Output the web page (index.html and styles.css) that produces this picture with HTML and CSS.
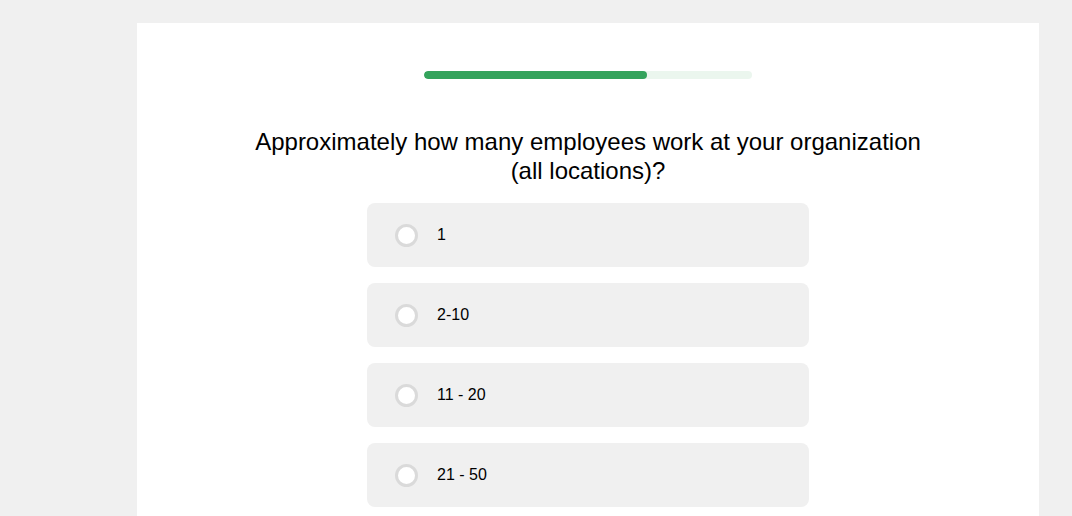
FILE: index.html
```html
<!DOCTYPE html>
<html lang="en">
<head>
  <meta charset="UTF-8">
  <meta name="viewport" content="width=device-width, initial-scale=1.0">
  <title>Survey</title>
  <link rel="stylesheet" href="styles.css">
</head>
<body>

<div class="survey-card">
  <div class="progress">
    <div class="progress-fill"></div>
  </div>

  <h2 class="question">Approximately how many employees work at your organization (all locations)?</h2>

  <div class="options">
    <label class="option">
      <span class="radio"></span>
      <span class="option-text">1</span>
    </label>
    <label class="option">
      <span class="radio"></span>
      <span class="option-text">2-10</span>
    </label>
    <label class="option">
      <span class="radio"></span>
      <span class="option-text">11 - 20</span>
    </label>
    <label class="option">
      <span class="radio"></span>
      <span class="option-text">21 - 50</span>
    </label>
  </div>
</div>

</body>
</html>
```

FILE: styles.css
```css
body {
  margin: 0;
  padding: 23px 0 0 137px;
  background-color: #f0f0f0;
  font-family: "Liberation Sans", Arial, sans-serif;
  color: #111;
}

.survey-card {
  width: 902px;
  min-height: 600px;
  background-color: #fff;
  padding-top: 48px;
  box-sizing: border-box;
  display: flex;
  flex-direction: column;
  align-items: center;
}

.progress {
  width: 328px;
  height: 8px;
  border-radius: 4px;
  background-color: #ebf6ee;
  overflow: hidden;
}

.progress-fill {
  width: 223px;
  height: 100%;
  border-radius: 4px;
  background-color: #34a35c;
}

.question {
  width: 690px;
  margin: 48px 0 18px;
  font-size: 24px;
  font-weight: normal;
  line-height: 29px;
  text-align: center;
  color: #000;
}

.options {
  display: flex;
  flex-direction: column;
  gap: 16px;
}

.option {
  width: 442px;
  height: 64px;
  box-sizing: border-box;
  padding-left: 28px;
  display: flex;
  align-items: center;
  gap: 19px;
  background-color: #f0f0f0;
  border-radius: 8px;
  cursor: pointer;
}

.radio {
  width: 23px;
  height: 23px;
  box-sizing: border-box;
  border: 3px solid #dadada;
  border-radius: 50%;
  background-color: #fff;
}

.option-text {
  font-size: 16px;
  color: #000;
}
```
